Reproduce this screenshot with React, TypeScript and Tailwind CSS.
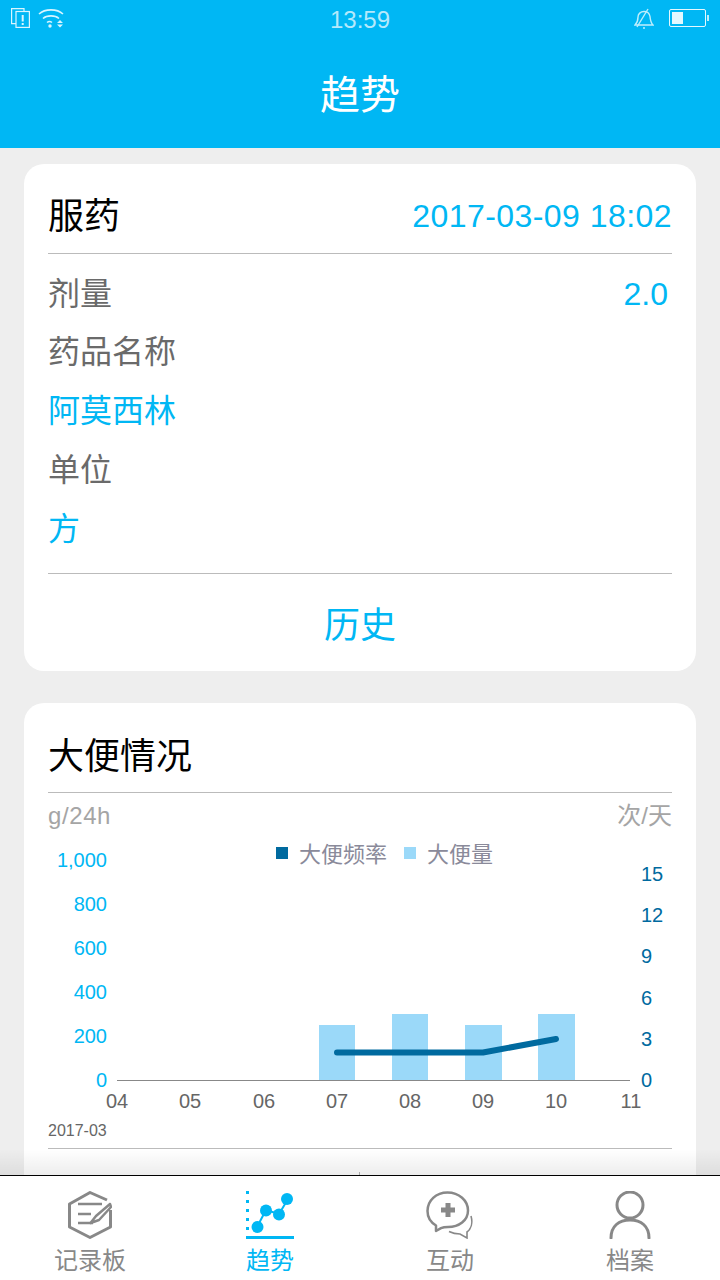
const BLUE = "#00b7f4";

const yLeft = [
  { label: "1,000", y: 860 },
  { label: "800", y: 904 },
  { label: "600", y: 948 },
  { label: "400", y: 992 },
  { label: "200", y: 1036 },
  { label: "0", y: 1080 },
];

const yRight = [
  { label: "15", y: 874 },
  { label: "12", y: 915 },
  { label: "9", y: 956 },
  { label: "6", y: 998 },
  { label: "3", y: 1039 },
  { label: "0", y: 1080 },
];

const xLabels = [
  { label: "04", x: 117 },
  { label: "05", x: 190 },
  { label: "06", x: 264 },
  { label: "07", x: 337 },
  { label: "08", x: 410 },
  { label: "09", x: 483 },
  { label: "10", x: 556 },
  { label: "11", x: 631 },
];

const bars = [
  { x: 319, w: 36, y: 1025 },
  { x: 392, w: 36, y: 1014 },
  { x: 465, w: 37, y: 1025 },
  { x: 538, w: 37, y: 1014 },
];

const rowClass = "flex items-center justify-between text-[32px] leading-none";

function StatusBar() {
  return (
    <div className="relative flex h-[40px] items-center justify-between text-white">
      <div className="flex items-center gap-[8px] pb-[4px] pl-[11px]">
        <svg width="19" height="20" viewBox="0 0 19 20" fill="none" stroke="#d9f5ff" strokeWidth="1.2">
          <path d="M13 3V.6H.6v15H5" />
          <rect x="5" y="3.500" width="13.400" height="15.900" />
          <path d="M11.700 7v6.500M11.700 15v2" strokeWidth="2" />
        </svg>
        <svg width="26" height="20" viewBox="0 0 26 20" fill="none" stroke="#d9f5ff" strokeWidth="1.6">
          <path d="M1 6c6-5.500 18-5.500 24 0" />
          <path d="M5 10.500c4-3.500 12-3.500 16 0" />
          <path d="M9 14.500c1.500-1.200 3.500-1.200 5 0" />
          <circle cx="12" cy="18" r="1.700" fill="#d9f5ff" stroke="none" />
          <path d="M19 15l3-3 3 3zM19 16.500h6l-3 3z" fill="#d9f5ff" stroke="none" />
        </svg>
      </div>
      <span className="absolute left-0 right-0 text-center font-['Liberation_Sans',sans-serif] text-[24px] text-[#b5e9fb]">13:59</span>
      <div className="flex items-center gap-[15px] pr-[11px] pb-[4px]">
        <svg width="20" height="21" viewBox="0 0 20 21" fill="none" stroke="#bfeefc" strokeWidth="1.400">
          <path d="M1 17c2-2 3-4 3-8 0-3 2.500-5.500 6-5.500 3 0 5.500 2 6 5 .3 3.500 1 6.500 3 8.500z" />
          <path d="M3 19L14 1" />
          <path d="M9 20h2" />
        </svg>
        <div className="flex items-center gap-[1px]">
          <div className="h-[18px] w-[37px] rounded-[2px] border border-[#e3f8ff] p-[2px]">
            <div className="h-full w-[11px] bg-[#e3f8ff]" />
          </div>
          <div className="h-[6px] w-[2px] bg-[#bfeefc]" />
        </div>
      </div>
    </div>
  );
}

function Chart() {
  return (
    <svg width="672" height="332" viewBox="24 816 672 332" className="block" fontFamily="'Liberation Sans', sans-serif">
      <rect x="276" y="847" width="12" height="12" fill="#006a9f" />
      <rect x="404" y="847" width="12" height="12" fill="#9bd9f9" />
      <text x="299" y="862" fontSize="22" fill="#8a8a9a" fontFamily="'Noto Sans CJK SC', sans-serif">大便频率</text>
      <text x="427" y="862" fontSize="22" fill="#8a8a9a" fontFamily="'Noto Sans CJK SC', sans-serif">大便量</text>

      {yLeft.map((t) => (
        <text key={t.label} x="107" y={t.y + 7} textAnchor="end" fontSize="20" fill={BLUE}>
          {t.label}
        </text>
      ))}
      {yRight.map((t) => (
        <text key={t.label} x="641" y={t.y + 7} fontSize="20" fill="#006a9f">
          {t.label}
        </text>
      ))}

      {bars.map((b) => (
        <rect key={b.x} x={b.x} y={b.y} width={b.w} height={1080 - b.y} fill="#9bd9f9" />
      ))}
      <line x1="117" y1="1080.500" x2="630" y2="1080.500" stroke="#888888" strokeWidth="1" />
      <path
        d="M337 1052.500H483L556 1039"
        fill="none"
        stroke="#006a9f"
        strokeWidth="6"
        strokeLinecap="round"
        strokeLinejoin="round"
      />
      {xLabels.map((t) => (
        <text key={t.label} x={t.x} y="1108" textAnchor="middle" fontSize="20" fill="#666666">
          {t.label}
        </text>
      ))}
      <text x="48" y="1136" fontSize="16" fill="#666666">2017-03</text>
    </svg>
  );
}

function TabIcon({ name }: { name: string }) {
  if (name === "记录板") {
    return (
      <svg width="44" height="48" viewBox="0 0 44 48" fill="none" stroke="#888888" strokeWidth="3">
        <path d="M39 9L22 1.500 1.500 13v23L22 46.500 42.500 36V19" strokeLinejoin="round" />
        <path d="M10 13h24M10 23h13M10 32h15" strokeWidth="2.500" />
        <path d="M42 13L28 25l-5.500 7 8.500-3 12-13z" fill="#fff" strokeWidth="2.500" strokeLinejoin="round" />
      </svg>
    );
  }
  if (name === "趋势") {
    return (
      <svg width="48" height="50" viewBox="0 0 48 50" fill={BLUE}>
        <path d="M0 0h3v3H0zM0 9h3v3H0zM0 18h3v3H0zM0 27h3v3H0zM0 36h3v3H0z" />
        <path d="M11 36L20 19l13 4 9-15" fill="none" stroke={BLUE} strokeWidth="2" />
        <circle cx="11.500" cy="36" r="6" />
        <circle cx="20" cy="19.500" r="6" />
        <circle cx="33" cy="23.500" r="6" />
        <circle cx="41" cy="8" r="6" />
        <rect x="0" y="45" width="48" height="3" />
      </svg>
    );
  }
  if (name === "互动") {
    return (
      <svg width="48" height="48" viewBox="0 0 48 48" fill="none" stroke="#888888" strokeWidth="2.500">
        <path d="M10 34.500C5 31.500 1.500 26 1.500 20 1.500 9.500 10 1.500 21.500 1.500S42 9.500 42 19.500 33 36 22 36c-2.500 0-5 .3-7 1.200L10 40z" strokeLinejoin="round" />
        <path d="M19.500 12h5v4.500H29v5h-4.500V26h-5v-4.500H15v-5h4.500z" fill="#888888" stroke="none" />
        <path d="M45 25c2 7 0 13-4 16l0 6-7-4c-4 0-8-1-11-2.500" strokeWidth="1.600" />
      </svg>
    );
  }
  return (
    <svg width="44" height="48" viewBox="0 0 44 48" fill="none" stroke="#888888" strokeWidth="3">
      <circle cx="22" cy="14" r="13" />
      <path d="M3 47C3 35 11 29 22 29s19 6 19 18" strokeLinecap="round" />
    </svg>
  );
}

function Tab({ name, active }: { name: string; active?: boolean }) {
  return (
    <div className="flex w-[180px] flex-col items-center">
      <div className="flex h-[52px] items-start justify-center">
        <TabIcon name={name} />
      </div>
      <span className={`mt-[4px] text-[24px] leading-[28px] ${active ? "text-[#00b7f4]" : "text-[#888888]"}`}>{name}</span>
    </div>
  );
}

export default function App() {
  return (
    <div className="relative flex h-[1280px] w-[720px] flex-col overflow-hidden bg-[#eeeeee] font-['Roboto','Noto_Sans_CJK_SC',sans-serif]">
      <header className="h-[148px] shrink-0 bg-[#00b7f4]">
        <StatusBar />
        <h1 className="pt-[33px] text-center text-[40px] leading-[46px] font-normal text-white">趋势</h1>
      </header>

      <main className="relative min-h-0 flex-1 overflow-hidden px-[24px] pt-[16px]">
        <section className="rounded-[20px] bg-white px-[24px]">
          <div className="flex h-[90px] items-center justify-between border-b border-[#bbbbbb] pt-[14px]">
            <h2 className="pt-[2px] text-[36px] font-normal text-black">服药</h2>
            <span className="font-['Liberation_Sans',sans-serif] text-[32px] tracking-[0.45px] text-[#00b7f4]">2017-03-09 18:02</span>
          </div>
          <div className="border-b border-[#bbbbbb] pt-[11px] pb-[14px]">
            <div className={`h-[58px] text-[#6a6a6a] ${rowClass}`}>
              <span>剂量</span>
              <span className="pr-[4px] font-['Liberation_Sans',sans-serif] text-[#00b7f4]">2.0</span>
            </div>
            <div className={`h-[58px] text-[#6a6a6a] ${rowClass}`}>药品名称</div>
            <div className={`h-[60px] text-[#00b7f4] ${rowClass}`}>阿莫西林</div>
            <div className={`h-[58px] text-[#6a6a6a] ${rowClass}`}>单位</div>
            <div className={`h-[60px] text-[#00b7f4] ${rowClass}`}>方</div>
          </div>
          <div className="flex h-[97px] items-center justify-center pt-[6px] text-[36px] text-[#00b7f4]">历史</div>
        </section>

        <section className="mt-[32px] rounded-[20px] bg-white">
          <div className="mx-[24px] flex h-[90px] items-center border-b border-[#bbbbbb] pt-[18px]">
            <h2 className="text-[36px] font-normal text-black">大便情况</h2>
          </div>
          <div className="relative h-[355px]">
            <div className="absolute inset-x-[24px] top-[7px] flex justify-between font-['Liberation_Sans','Noto_Sans_CJK_SC',sans-serif] text-[24px] leading-[32px] text-[#a5a5a5]">
              <span className="tracking-[0.6px]">g/24h</span>
              <span>次/天</span>
            </div>
            <div className="absolute inset-x-0 top-[23px]">
              <Chart />
            </div>
          </div>
          <div className="mx-[24px] h-[100px] border-t border-[#bbbbbb]" />
        </section>

        <div className="absolute inset-x-0 bottom-0 h-[26px] bg-gradient-to-b from-transparent to-black/[.07]" />
        <div className="absolute bottom-0 left-[359px] h-[3px] w-[1px] bg-[#aaaaaa]" />
      </main>

      <nav className="flex h-[105px] shrink-0 border-t border-black bg-white pt-[15px]">
        <Tab name="记录板" />
        <Tab name="趋势" active />
        <Tab name="互动" />
        <Tab name="档案" />
      </nav>
    </div>
  );
}
